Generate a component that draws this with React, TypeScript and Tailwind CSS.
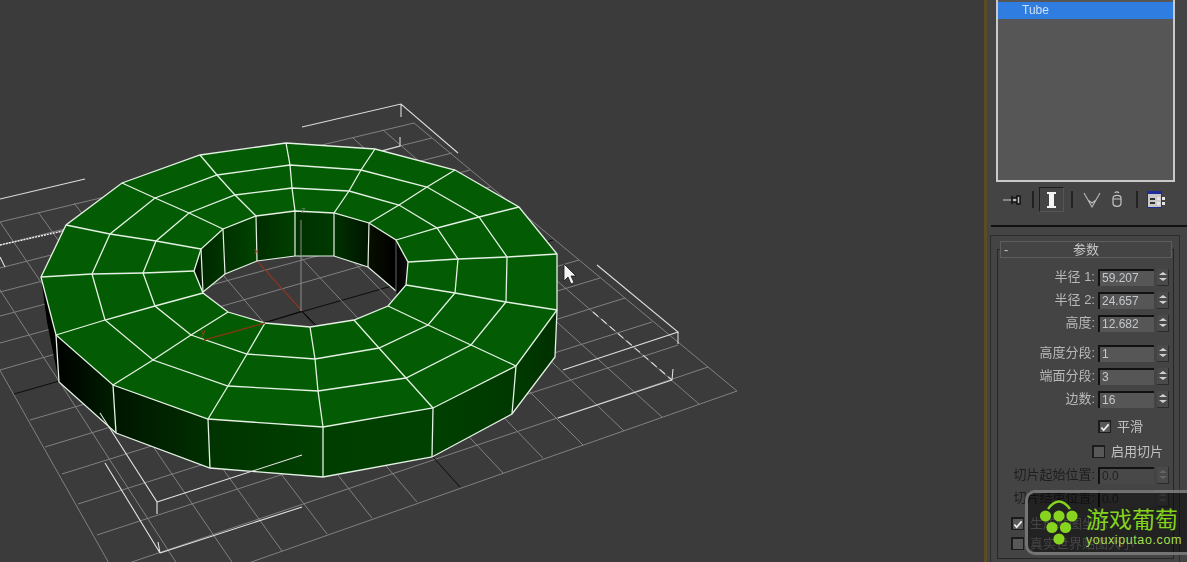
import React from "react";

type Pt = [number, number];
type Seg = [number, number, number, number];

// floor grid: lines running to the upper right, then lines running to the lower right
const uLines: Seg[] = [
  [0, 222, 414, 123], [0, 245, 432, 138], [0, 268, 452, 153], [0, 292, 470, 170], [0, 316, 490, 187],
  [0, 343, 510, 203], [0, 370, 528, 218], [14, 394, 553, 240], [30, 420, 579, 260], [45, 447, 600, 278],
  [62, 474, 625, 298], [78, 504, 652, 322], [97, 535, 678, 345], [120, 566, 708, 367], [240, 566, 737, 391],
];
const vLines: Seg[] = [
  [414, 123, 737, 391], [383, 130, 699, 404], [353, 138, 662, 417], [324, 144, 624, 431], [290, 152, 583, 445],
  [255, 160, 543, 458], [218, 169, 503, 473], [182, 178, 460, 487], [147, 186, 417, 502], [115, 194, 372, 518],
  [74, 203, 327, 534], [38, 212, 282, 551], [0, 222, 236, 568], [-38, 231, 190, 584], [-68, 250, 132, 604],
];

// top face of the tube, outer ring to hole
const rings: Pt[][] = [
  [[41, 277], [66, 225], [122, 183], [200, 155], [286, 143], [375, 149], [455, 170], [519, 207], [557, 254], [557, 310], [516, 366], [433, 408], [323, 427], [208, 419], [113, 385], [56, 335]],
  [[92, 274], [110, 234], [155, 198], [217, 175], [290, 165], [361, 170], [427, 187], [479, 217], [507, 257], [506, 302], [471, 345], [406, 378], [318, 391], [228, 386], [153, 360], [105, 320]],
  [[143, 273], [156, 241], [189, 213], [235, 195], [292, 188], [349, 191], [399, 205], [437, 228], [458, 259], [455, 293], [428, 325], [379, 348], [315, 359], [247, 354], [191, 335], [155, 306]],
  [[194, 271], [201, 249], [223, 229], [256, 216], [295, 211], [334, 213], [369, 223], [396, 240], [408, 262], [406, 285], [388, 306], [354, 320], [310, 327], [265, 323], [228, 312], [203, 293]],
];

type Face = { pts: Pt[]; from: string; to: string };

const sideFaces: Face[] = [
  { pts: [[41, 277], [56, 335], [59, 382], [47, 322]], from: "#000000", to: "#000000" },
  { pts: [[56, 335], [113, 385], [116, 433], [59, 382]], from: "#000000", to: "#001f00" },
  { pts: [[113, 385], [208, 419], [210, 468], [116, 433]], from: "#001500", to: "#003000" },
  { pts: [[208, 419], [323, 427], [323, 477], [210, 468]], from: "#003300", to: "#004000" },
  { pts: [[323, 427], [433, 408], [432, 457], [323, 477]], from: "#003e00", to: "#004000" },
  { pts: [[433, 408], [516, 366], [512, 414], [432, 457]], from: "#004000", to: "#003800" },
  { pts: [[516, 366], [557, 310], [555, 357], [512, 414]], from: "#003a00", to: "#003000" },
];

const wallFaces: Face[] = [
  { pts: [[194, 271], [201, 249], [203, 292]], from: "#000a00", to: "#002000" },
  { pts: [[201, 249], [223, 229], [225, 274], [203, 292]], from: "#002800", to: "#003400" },
  { pts: [[223, 229], [256, 216], [257, 261], [225, 274]], from: "#003000", to: "#004400" },
  { pts: [[256, 216], [295, 211], [295, 256], [257, 261]], from: "#002c00", to: "#004000" },
  { pts: [[295, 211], [334, 213], [334, 256], [295, 256]], from: "#003000", to: "#003a00" },
  { pts: [[334, 213], [369, 223], [368, 267], [334, 256]], from: "#003200", to: "#001400" },
  { pts: [[369, 223], [396, 240], [396, 291], [368, 267]], from: "#081000", to: "#000000" },
  { pts: [[396, 240], [408, 262], [406, 285], [398, 296], [396, 291]], from: "#000000", to: "#101010" },
];

const toPoints = (pts: Pt[]) => pts.map((p) => p.join(",")).join(" ");
const toPath = (pts: Pt[]) => "M" + pts.map((p) => p.join(" ")).join("L") + "Z";

function FaceShape({ face, id }: { face: Face; id: string }) {
  const xs = face.pts.map((p) => p[0]);
  return (
    <>
      <linearGradient id={id} gradientUnits="userSpaceOnUse" x1={Math.min(...xs)} y1="0" x2={Math.max(...xs)} y2="0">
        <stop offset="0" stopColor={face.from} />
        <stop offset="1" stopColor={face.to} />
      </linearGradient>
      <polygon points={toPoints(face.pts)} fill={`url(#${id})`} />
    </>
  );
}

function Viewport() {
  const edge = "#e4f1e4";
  return (
    <svg width="984" height="562" viewBox="0 0 984 562" className="block blur-[0.35px]">
      <g stroke="#808080" strokeWidth="1" fill="none">
        {uLines.map((l, i) => (
          <line key={i} x1={l[0]} y1={l[1]} x2={l[2]} y2={l[3]} stroke={i === 7 ? "#0c0c0c" : undefined} />
        ))}
        {vLines.map((l, i) => (
          <line key={i} x1={l[0]} y1={l[1]} x2={l[2]} y2={l[3]} stroke={i === 7 ? "#0c0c0c" : undefined} />
        ))}
      </g>

      {/* selection brackets */}
      <g stroke="#dcdcdc" strokeWidth="1.1" fill="none">
        <path d="M302 127L401 104L458 153M401 104V117" />
        <path d="M382 151L400 146V137" />
        <path d="M0 199L85 179" />
        <path d="M0 245L63 231" strokeDasharray="2 1" stroke="#f0f0f0" strokeWidth="1.4" />
        <path d="M0 257L5 267" />
        <path d="M597 265L678 332L563 370M678 332V344" />
        <path d="M672 380L558 418M672 380L673 369" />
        <path d="M593 312L672 380" strokeDasharray="7 4" />
      </g>

      <path d="M265 323L302 311L316 325" stroke="#0c0c0c" fill="none" />
      <path d="M256 260L302 311" stroke="#8a3a28" strokeWidth="1.2" fill="none" />

      {wallFaces.map((f, i) => (
        <FaceShape key={i} face={f} id={`wall${i}`} />
      ))}
      <g stroke={edge} strokeWidth="1.2" fill="none">
        <path d="M203 292L225 274L257 261L295 256L334 256L368 267L396 291" />
        <path d="M201 249L203 292M223 229L225 274M256 216L257 261M295 211V256M334 213V256M369 223L368 267" />
        <path d="M396 240V291" stroke="#555555" />
      </g>

      {sideFaces.map((f, i) => (
        <FaceShape key={i} face={f} id={`side${i}`} />
      ))}
      <g stroke={edge} strokeWidth="1.3" fill="none">
        <path d="M56 335L59 382L116 433L210 468L323 477L432 457L512 414L555 357L557 310" />
        <path d="M113 385L116 433M208 419L210 468M323 427V477M433 408L432 457M516 366L512 414" />
      </g>

      <path d={toPath(rings[0]) + toPath(rings[3])} fill="#035c03" fillRule="evenodd" />
      <g stroke={edge} strokeWidth="1.3" fill="none">
        {rings.map((r, i) => (
          <polygon key={i} points={toPoints(r)} />
        ))}
        {rings[0].map((_, i) => (
          <polyline key={i} points={toPoints(rings.map((r) => r[i]))} />
        ))}
      </g>

      {/* brackets and gizmo that lie in front of the tube */}
      <g stroke="#e4e4e4" strokeWidth="1.1" fill="none">
        <path d="M100 413L157 502V514M157 502L302 455" />
        <path d="M105 463L160 553L158 542M160 553L302 507" />
      </g>
      <path d="M301 220V311" stroke="#8c8c8c" fill="none" />
      <path d="M265 323L204 340" stroke="#7a3a10" strokeWidth="1.3" fill="none" />
      <g fontSize="9" className="[font-family:'Liberation_Sans',sans-serif]">
        <text x="254" y="254" fill="#a8401c">x</text>
        <text x="201" y="335" fill="#a8401c">y</text>
        <text x="301" y="213" fill="#777777">z</text>
      </g>

      {/* mouse pointer */}
      <path d="M564 264V281L568 277L571 284L574 282.5L571 276H576Z" fill="#f4f4f4" stroke="#1a1a1a" strokeWidth="0.8" />
    </svg>
  );
}

function Spinner({ dim }: { dim?: boolean }) {
  return (
    <div className="ml-[3px] flex h-[17px] w-[12px] flex-col items-center justify-center gap-[3px] border-b border-r border-[#2c2c2c] bg-[#4a4a4a]">
      <span className={`h-0 w-0 border-x-[4px] border-b-[3px] border-x-transparent ${dim ? "border-b-[#666666]" : "border-b-[#d0d0d0]"}`} />
      <span className={`h-0 w-0 border-x-[4px] border-t-[3px] border-x-transparent ${dim ? "border-t-[#666666]" : "border-t-[#d0d0d0]"}`} />
    </div>
  );
}

function SpinRow({ label, value, mt, dim }: { label: string; value: string; mt: string; dim?: boolean }) {
  return (
    <div className={`flex h-[16px] items-center justify-end pr-[4px] ${mt}`}>
      <span className={`whitespace-nowrap text-[13px] leading-4 ${dim ? "text-[#1e1e1e]" : "text-[#b8b8b8]"}`}>{label}</span>
      <div
        className={`ml-[3px] h-[17px] w-[56px] border-l-2 border-t-2 border-[#111111] pl-[2px] text-[12px] leading-[15px] ${
          dim ? "bg-[#484848] text-[#222222]" : "bg-[#565656] text-[#c4c8cc]"
        }`}
      >
        {value}
      </div>
      <Spinner dim={dim} />
    </div>
  );
}

function Box({ checked }: { checked?: boolean }) {
  return (
    <div className="flex h-[13px] w-[13px] shrink-0 items-center justify-center border border-t-2 border-l-2 border-[#1c1c1c] bg-[#585858]">
      {checked && (
        <svg width="11" height="11" viewBox="0 0 11 11" fill="none">
          <path d="M1.5 5.5L4 8.5L9.5 2" stroke="#f0f0f0" strokeWidth="1.9" />
        </svg>
      )}
    </div>
  );
}

function CheckRow({ label, checked, mt, pad, tone }: { label: string; checked?: boolean; mt: string; pad: string; tone: string }) {
  return (
    <div className={`flex h-[13px] items-center ${mt} ${pad}`}>
      <Box checked={checked} />
      <span className={`ml-[6px] whitespace-nowrap text-[13px] leading-4 ${tone}`}>{label}</span>
    </div>
  );
}

function Toolbar() {
  return (
    <div className="mt-[5px] flex h-[25px] items-center pl-[16px]">
      <svg width="18" height="12" viewBox="0 0 18 12">
        <path d="M0 6H9" stroke="#c8c8c8" />
        <path d="M9 2V10M10 4H14V8H10M14 2H17V10H14Z" stroke="#0e0e0e" strokeWidth="1.4" fill="#bbbbbb" />
      </svg>
      <div className="ml-[11px] h-[17px] w-[2px] bg-[#222222]" />
      <div className="ml-[5px] flex h-[25px] w-[25px] items-center justify-center border border-[#1d1d1d] border-b-[#555555] border-r-[#555555]">
        <svg width="9" height="16" viewBox="0 0 9 16">
          <path d="M0 0H9V2H7V14H9V16H0V14H2V2H0Z" fill="#f4f4f4" />
        </svg>
      </div>
      <div className="ml-[7px] h-[17px] w-[2px] bg-[#222222]" />
      <svg className="ml-[10px]" width="18" height="16" viewBox="0 0 18 16" fill="none">
        <path d="M1 1L9 15L17 1M5 8L9 11L13 8" stroke="#b8b8b8" strokeWidth="1.1" />
      </svg>
      <svg className="ml-[10px]" width="12" height="17" viewBox="0 0 12 17" fill="none">
        <path d="M4 2C4 0.5 7 0.5 8 2M2 7C2 3.5 10 3.5 10 7V12C10 16.5 2 16.5 2 12ZM2 8H10" stroke="#c4c4c4" strokeWidth="1.2" />
      </svg>
      <div className="ml-[13px] h-[17px] w-[2px] bg-[#222222]" />
      <svg className="ml-[9px]" width="19" height="18" viewBox="0 0 19 18">
        <rect x="0.5" y="0.5" width="14" height="16" fill="#c8c8c8" stroke="#1f2c9a" />
        <rect x="0" y="0" width="15" height="3" fill="#1f2c9a" />
        <path d="M3 7H8V9H3ZM3 11H8V13H3Z" fill="#333333" />
        <path d="M10 6H13V9H10ZM15 6H18V9H15ZM10 11H13V14H10ZM15 11H18V14H15Z" fill="#e6e6e6" />
      </svg>
    </div>
  );
}

function Watermark() {
  return (
    <div className="absolute -right-[12px] left-[1025px] top-[490px] flex h-[65px] rounded-[10px] border-[3px] border-[#8a8a8a]/80 bg-black/50">
      <svg className="ml-[5px] shrink-0" width="52" height="55" viewBox="0 0 52 55">
        <path d="M15 16Q26 1 37 16" stroke="#86d41e" strokeWidth="2.4" fill="none" />
        {([[12.5, 23], [26, 23], [39, 23], [19, 34.5], [32.5, 34.5], [26, 46]] as Pt[]).map((c, i) => (
          <circle key={i} cx={c[0]} cy={c[1]} r="5.6" fill="#86d41e" />
        ))}
      </svg>
      <div className="ml-[1px] flex flex-col">
        <span className="mt-[14px] whitespace-nowrap text-[23px] leading-[26px] text-[#84d41c]">游戏葡萄</span>
        <span className="whitespace-nowrap text-[12.5px] leading-[14px] tracking-[0.6px] text-[#a6de4e]">youxiputao.com</span>
      </div>
    </div>
  );
}

export default function App() {
  return (
    <div className="relative flex h-[562px] w-[1187px] overflow-hidden bg-[#3b3b3b] [font-family:'Liberation_Sans','Noto_Sans_CJK_SC',sans-serif]">
      <div className="w-[984px] shrink-0">
        <Viewport />
      </div>
      <div className="w-[3px] shrink-0 bg-[#5c4c22]" />
      <div className="flex-1 bg-[#444444] blur-[0.3px]">
        <div className="ml-[9px] h-[182px] w-[179px] border-2 border-t-0 border-[#c9c9c9] bg-[#565656] pt-[2px]">
          <div className="h-[17px] bg-[#2f7de1] pl-[24px] text-[12px] leading-[17px] text-[#cfe0f6]">Tube</div>
        </div>
        <Toolbar />
        <div className="ml-[4px] mt-[13px] h-[2px] bg-[#111111]" />
        <div className="ml-[3px] mt-[8px] h-[330px] w-[190px] border-x border-t border-[#2c2c2c] pt-[5px]">
          <div className="relative z-10 ml-[9px] flex h-[17px] w-[172px] items-center border border-[#5e5e5e] bg-[#444444] px-[3px] text-[13px] text-[#c4c4c4]">
            <span className="w-0">-</span>
            <span className="flex-1 text-center">参数</span>
          </div>
          <div className="-mt-[9px] ml-[6px] h-[310px] w-[177px] border border-[#262626] pt-[19px]">
            <SpinRow label="半径 1:" value="59.207" mt="" />
            <SpinRow label="半径 2:" value="24.657" mt="mt-[7px]" />
            <SpinRow label="高度:" value="12.682" mt="mt-[7px]" />
            <SpinRow label="高度分段:" value="1" mt="mt-[14px]" />
            <SpinRow label="端面分段:" value="3" mt="mt-[7px]" />
            <SpinRow label="边数:" value="16" mt="mt-[7px]" />
            <CheckRow label="平滑" checked mt="mt-[13px]" pad="pl-[100px]" tone="text-[#c0c0c0]" />
            <CheckRow label="启用切片" mt="mt-[12px]" pad="pl-[94px]" tone="text-[#c0c0c0]" />
            <SpinRow label="切片起始位置:" value="0.0" mt="mt-[9px]" dim />
            <SpinRow label="切片结束位置:" value="0.0" mt="mt-[7px]" dim />
            <CheckRow label="生成贴图坐标" checked mt="mt-[11px]" pad="pl-[13px]" tone="text-[#8a8a8a]" />
            <CheckRow label="真实世界贴图大小" mt="mt-[7px]" pad="pl-[13px]" tone="text-[#8a8a8a]" />
          </div>
        </div>
      </div>
      <Watermark />
    </div>
  );
}
